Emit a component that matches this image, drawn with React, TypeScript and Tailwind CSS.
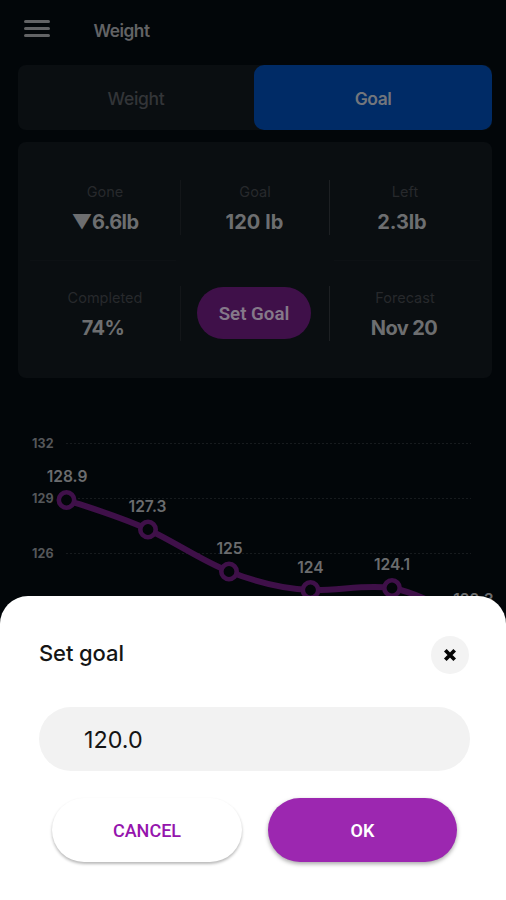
import { useState } from 'react';

type StatProps = {
  label: string;
  value: string;
  valueClassName?: string;
};

function Stat({ label, value, valueClassName = '' }: StatProps): React.JSX.Element {
  return (
    <div className="flex h-[56px] flex-col items-center">
      <span className="h-[29px] text-[14.5px] leading-[24px] text-[#27292c]">{label}</span>
      <span className={['text-xl leading-[26px] font-bold whitespace-pre text-[#6d6e70]', valueClassName].join(' ')}>
        {value}
      </span>
    </div>
  );
}

function Divider({ bright = false }: { bright?: boolean }): React.JSX.Element {
  return <div className={['h-[55px] w-px', bright ? 'bg-[#1d2023]' : 'bg-[#131619]'].join(' ')} />;
}

type Point = { x: number; y: number; label: string; labelY: number; labelX: number };

const POINTS: Point[] = [
  { x: 66.5, y: 80, label: '128.9', labelX: 67, labelY: 62 },
  { x: 148, y: 109.5, label: '127.3', labelX: 147.5, labelY: 92 },
  { x: 229, y: 151.5, label: '125', labelX: 229.5, labelY: 134 },
  { x: 310.5, y: 170, label: '124', labelX: 310.5, labelY: 152.5 },
  { x: 392, y: 168, label: '124.1', labelX: 392, labelY: 150.2 },
  { x: 473, y: 203, label: '122.3', labelX: 473.5, labelY: 185 },
];

const GRID_LINES = [
  { y: 23.5, label: '132' },
  { y: 78.5, label: '129' },
  { y: 133.5, label: '126' },
];

function WeightChart(): React.JSX.Element {
  return (
    <svg width="506" height="200" viewBox="0 0 506 200" className="block" aria-label="Weight history">
      {GRID_LINES.map((line) => (
        <g key={line.label}>
          <line x1="66" x2="471" y1={line.y} y2={line.y} stroke="#171b1e" strokeWidth="1" strokeDasharray="2 2" />
          <text x="32" y={line.y + 4} fontSize="12.5" fontWeight="700" fill="#55575a" textLength="21.5">
            {line.label}
          </text>
        </g>
      ))}
      <path
        d="M66.5 80 C94 89 121 97 148 109.5 C175 122 202 141 229 151.5 C256 162 283 169 310.5 170 C338 171 365 164 392 168 C419 173 446 190 473 203"
        fill="none"
        stroke="#3f1049"
        strokeWidth="6"
      />
      {POINTS.map((p) => (
        <g key={p.label}>
          <circle cx={p.x} cy={p.y} r="7.7" fill="#020609" stroke="#3f1049" strokeWidth="4.6" />
          <text x={p.labelX} y={p.labelY} fontSize="15.6" fontWeight="600" fill="#6b6c6e" textAnchor="middle">
            {p.label}
          </text>
        </g>
      ))}
    </svg>
  );
}

function GoalSheet(): React.JSX.Element {
  const [goal, setGoal] = useState('120.0');

  return (
    <div className="absolute inset-x-0 bottom-0 flex h-[304.5px] flex-col rounded-t-[28px] bg-white px-[39px] pt-10">
      <div className="flex h-[38px] items-center justify-between">
        <h2 className="pb-[3px] text-[22px] font-medium tracking-[-0.1px] text-[#151515]">Set goal</h2>
        <button
          type="button"
          aria-label="Close"
          className="mr-[-2px] flex size-[38px] items-center justify-center rounded-full bg-[#f3f3f3]"
        >
          <svg width="14" height="14" viewBox="0 0 14 14" aria-hidden="true">
            <path d="M2.3 2.3 L11.7 11.7 M11.7 2.3 L2.3 11.7" stroke="#050505" strokeWidth="3.7" />
          </svg>
        </button>
      </div>

      <input
        value={goal}
        onChange={(e) => setGoal(e.target.value)}
        aria-label="Goal weight"
        className="mt-[33.5px] h-[64px] w-[431px] shrink-0 rounded-full bg-[#f2f2f2] pt-px pl-[45px] text-[23.3px] text-[#151515] outline-none"
      />

      <div className="mt-[27px] flex gap-[26px] pl-[13px] font-['Roboto','Liberation_Sans',sans-serif] text-[18px]">
        <button
          type="button"
          className="h-[64px] w-[190px] rounded-full bg-white pt-px font-medium text-[#9515ad] shadow-[0_2px_3px_rgba(0,0,0,0.28)]"
        >
          CANCEL
        </button>
        <button
          type="button"
          className="h-[64px] w-[189px] rounded-full bg-[#9c27b0] pt-px font-semibold text-white shadow-[0_2px_4px_rgba(0,0,0,0.35)]"
        >
          OK
        </button>
      </div>
    </div>
  );
}

export default function App(): React.JSX.Element {
  return (
    <div className="relative h-[900px] w-[506px] overflow-hidden bg-[#020609] font-['Inter','Liberation_Sans',sans-serif]">
      <header className="flex h-[65px] items-start pl-6">
        <button type="button" aria-label="Menu" className="mt-5 flex w-[26px] flex-col gap-1">
          <span className="h-[3px] rounded-full bg-[#626365]" />
          <span className="h-[3px] rounded-full bg-[#626365]" />
          <span className="h-[3px] rounded-full bg-[#626365]" />
        </button>
        <h1 className="mt-[18px] ml-[43.5px] text-[17.3px] leading-[26px] font-semibold tracking-[-0.5px] text-[#626365]">Weight</h1>
      </header>

      {/* Tabs */}
      <div className="mr-[14px] ml-[18px] flex h-[65px] rounded-[8px] bg-[#0a0e11] text-[17.5px] tracking-[-0.3px]">
        <button type="button" className="w-[236px] pt-1 font-medium text-[#333538]">Weight</button>
        <button type="button" className="w-[238px] rounded-[10px] bg-[#002b66] pt-1 font-semibold tracking-[-0.5px] text-[#73767c]">Goal</button>
      </div>

      {/* Stats */}
      <section className="mt-3 mr-[14px] ml-[18px] h-[236px] rounded-[8px] bg-[#0a0e11] px-3 pt-[38px]">
        <div className="grid grid-cols-[150px_1px_148px_1px_150px]">
          <Stat label="Gone" value="▼6.6lb" valueClassName="tracking-[-0.6px]" />
          <Divider />
          <Stat label="Goal" value="120 lb" valueClassName="pr-px tracking-[0.1px]" />
          <Divider bright />
          <Stat label="Left" value="2.3lb" valueClassName="pr-1.5 tracking-[-0.1px]" />
        </div>
        <div className="mt-6 flex justify-between">
          <div className="h-px w-[146px] bg-[#0d1114]" />
          <div className="h-px w-[146px] bg-[#0d1114]" />
        </div>
        <div className="mt-[25px] grid grid-cols-[150px_1px_148px_1px_150px]">
          <Stat label="Completed" value="74%" valueClassName="pr-1 tracking-[-0.6px]" />
          <Divider />
          <button
            type="button"
            className="mt-px ml-4 h-[52px] w-[114px] rounded-full bg-[#3f1049] pt-0.5 font-['Roboto','Liberation_Sans',sans-serif] text-[18.7px] font-semibold text-[#857989]"
          >
            Set Goal
          </button>
          <Divider bright />
          <Stat label="Forecast" value="Nov 20" valueClassName="pr-0.5 tracking-[-0.6px]" />
        </div>
      </section>

      <div className="mt-[42px]">
        <WeightChart />
      </div>

      <GoalSheet />
    </div>
  );
}
